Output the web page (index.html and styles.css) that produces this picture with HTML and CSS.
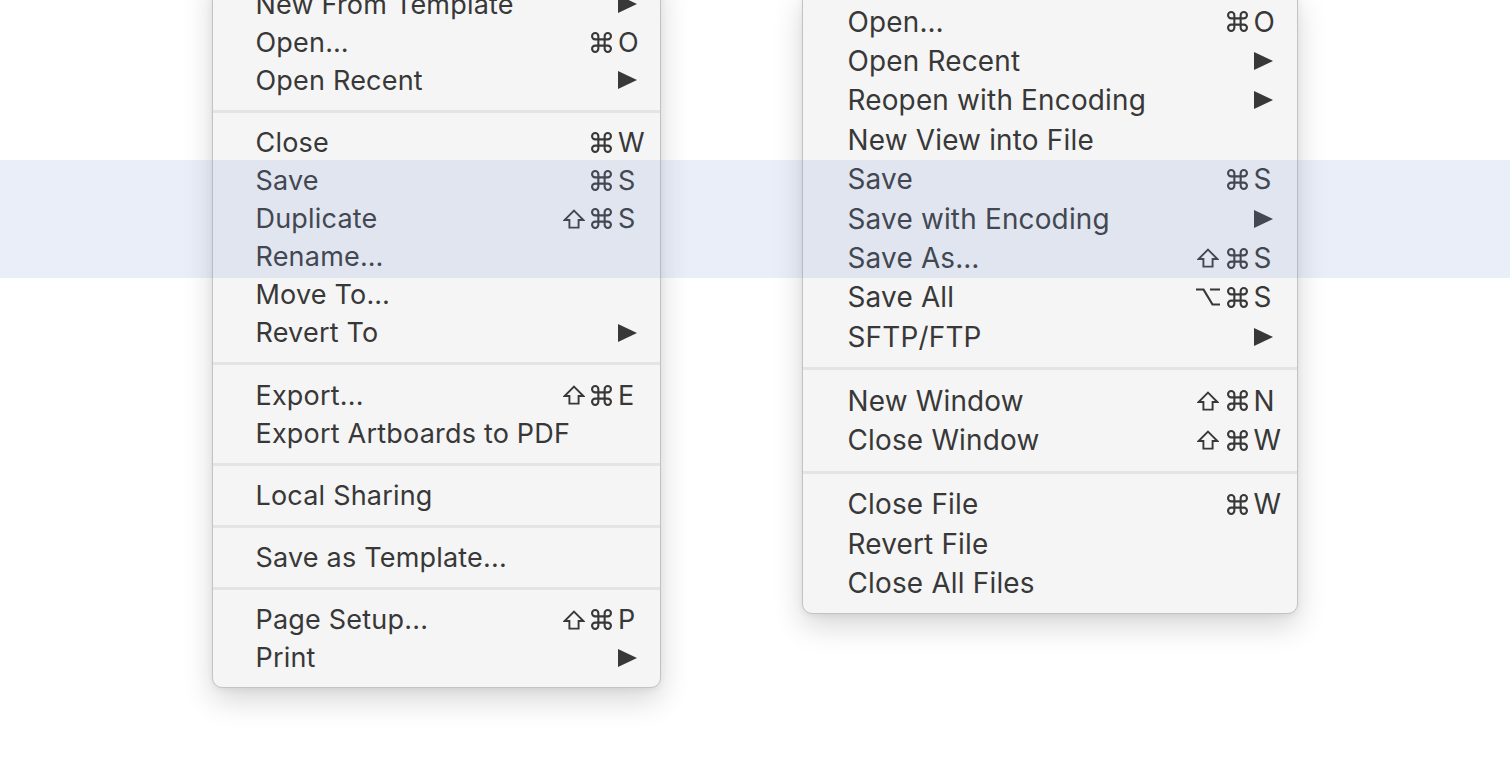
FILE: index.html
```html
<!DOCTYPE html>
<html lang="en">
<head>
<meta charset="utf-8">
<title>Menus</title>
<link rel="stylesheet" href="styles.css">
</head>
<body>
<svg class="defs" width="0" height="0" aria-hidden="true">
  <defs>
    <symbol id="cmd" viewBox="2 2 20 20"><path d="M9 9V6A3 3 0 1 0 6 9H18A3 3 0 1 0 15 6V18A3 3 0 1 0 18 15H6A3 3 0 1 0 9 18Z"/></symbol>
    <symbol id="shift" viewBox="0 0 22 20"><path d="M11 1.6L20.4 11H15.6V18.6H6.4V11H1.6Z"/></symbol>
    <symbol id="opt" viewBox="0 0 26 20"><path d="M1 2.5H8.5L17.5 17.5H25M15 2.5H25"/></symbol>
    <symbol id="sub" viewBox="0 0 19 18"><polygon points="0,0 19,9 0,18"/></symbol>
  </defs>
</svg>
<div class="stage">
  <div class="menu menu-left">
    <div class="row"><span class="label">New From Template</span><span class="keys"><span class="key"><svg class="arrow" width="19" height="18"><use href="#sub"/></svg></span></span></div>
    <div class="row"><span class="label">Open…</span><span class="keys"><span class="mod"><svg class="ic-cmd" width="21" height="21"><use href="#cmd"/></svg></span><span class="key">O</span></span></div>
    <div class="row"><span class="label">Open Recent</span><span class="keys"><span class="key"><svg class="arrow" width="19" height="18"><use href="#sub"/></svg></span></span></div>
    <div class="sep"></div>
    <div class="row"><span class="label">Close</span><span class="keys"><span class="mod"><svg class="ic-cmd" width="21" height="21"><use href="#cmd"/></svg></span><span class="key">W</span></span></div>
    <div class="row"><span class="label">Save</span><span class="keys"><span class="mod"><svg class="ic-cmd" width="21" height="21"><use href="#cmd"/></svg></span><span class="key">S</span></span></div>
    <div class="row"><span class="label">Duplicate</span><span class="keys"><span class="mod mod-shift"><svg class="ic-shift" width="22" height="20"><use href="#shift"/></svg></span><span class="mod"><svg class="ic-cmd" width="21" height="21"><use href="#cmd"/></svg></span><span class="key">S</span></span></div>
    <div class="row"><span class="label">Rename…</span></div>
    <div class="row"><span class="label">Move To…</span></div>
    <div class="row"><span class="label">Revert To</span><span class="keys"><span class="key"><svg class="arrow" width="19" height="18"><use href="#sub"/></svg></span></span></div>
    <div class="sep"></div>
    <div class="row"><span class="label">Export...</span><span class="keys"><span class="mod mod-shift"><svg class="ic-shift" width="22" height="20"><use href="#shift"/></svg></span><span class="mod"><svg class="ic-cmd" width="21" height="21"><use href="#cmd"/></svg></span><span class="key">E</span></span></div>
    <div class="row"><span class="label">Export Artboards to PDF</span></div>
    <div class="sep"></div>
    <div class="row"><span class="label">Local Sharing</span></div>
    <div class="sep"></div>
    <div class="row"><span class="label">Save as Template...</span></div>
    <div class="sep"></div>
    <div class="row"><span class="label">Page Setup...</span><span class="keys"><span class="mod mod-shift"><svg class="ic-shift" width="22" height="20"><use href="#shift"/></svg></span><span class="mod"><svg class="ic-cmd" width="21" height="21"><use href="#cmd"/></svg></span><span class="key">P</span></span></div>
    <div class="row"><span class="label">Print</span><span class="keys"><span class="key"><svg class="arrow" width="19" height="18"><use href="#sub"/></svg></span></span></div>
  </div>

  <div class="menu menu-right">
    <div class="row"><span class="label">Open…</span><span class="keys"><span class="mod"><svg class="ic-cmd" width="21" height="21"><use href="#cmd"/></svg></span><span class="key">O</span></span></div>
    <div class="row"><span class="label">Open Recent</span><span class="keys"><span class="key"><svg class="arrow" width="19" height="18"><use href="#sub"/></svg></span></span></div>
    <div class="row"><span class="label">Reopen with Encoding</span><span class="keys"><span class="key"><svg class="arrow" width="19" height="18"><use href="#sub"/></svg></span></span></div>
    <div class="row"><span class="label">New View into File</span></div>
    <div class="row"><span class="label">Save</span><span class="keys"><span class="mod"><svg class="ic-cmd" width="21" height="21"><use href="#cmd"/></svg></span><span class="key">S</span></span></div>
    <div class="row"><span class="label">Save with Encoding</span><span class="keys"><span class="key"><svg class="arrow" width="19" height="18"><use href="#sub"/></svg></span></span></div>
    <div class="row"><span class="label">Save As…</span><span class="keys"><span class="mod mod-shift"><svg class="ic-shift" width="22" height="20"><use href="#shift"/></svg></span><span class="mod"><svg class="ic-cmd" width="21" height="21"><use href="#cmd"/></svg></span><span class="key">S</span></span></div>
    <div class="row"><span class="label">Save All</span><span class="keys"><span class="mod mod-opt"><svg class="ic-opt" width="26" height="20"><use href="#opt"/></svg></span><span class="mod"><svg class="ic-cmd" width="21" height="21"><use href="#cmd"/></svg></span><span class="key">S</span></span></div>
    <div class="row"><span class="label">SFTP/FTP</span><span class="keys"><span class="key"><svg class="arrow" width="19" height="18"><use href="#sub"/></svg></span></span></div>
    <div class="sep"></div>
    <div class="row"><span class="label">New Window</span><span class="keys"><span class="mod mod-shift"><svg class="ic-shift" width="22" height="20"><use href="#shift"/></svg></span><span class="mod"><svg class="ic-cmd" width="21" height="21"><use href="#cmd"/></svg></span><span class="key">N</span></span></div>
    <div class="row"><span class="label">Close Window</span><span class="keys"><span class="mod mod-shift"><svg class="ic-shift" width="22" height="20"><use href="#shift"/></svg></span><span class="mod"><svg class="ic-cmd" width="21" height="21"><use href="#cmd"/></svg></span><span class="key">W</span></span></div>
    <div class="sep"></div>
    <div class="row"><span class="label">Close File</span><span class="keys"><span class="mod"><svg class="ic-cmd" width="21" height="21"><use href="#cmd"/></svg></span><span class="key">W</span></span></div>
    <div class="row"><span class="label">Revert File</span></div>
    <div class="row"><span class="label">Close All Files</span></div>
  </div>
</div>
<div class="highlight"></div>
</body>
</html>
```

FILE: styles.css
```css
* { box-sizing: border-box; }

html, body {
  margin: 0;
  height: 784px;
  overflow: hidden;
  background: #ffffff;
}

body {
  font-family: Inter, "Liberation Sans", Arial, sans-serif;
  color: #383838;
  position: relative;
}

.defs {
  position: absolute;
  width: 0;
  height: 0;
  overflow: hidden;
}

.stage {
  display: flex;
  align-items: flex-start;
  gap: 141px;
  padding-left: 212px;
}

.menu {
  background: #f5f5f5;
  border: 1px solid #c3c3c3;
  border-radius: 0 0 10px 10px;
  box-shadow: 0 12px 30px rgba(0, 0, 0, 0.16), 0 2px 6px rgba(0, 0, 0, 0.06);
  padding: 10px 0;
  letter-spacing: 0.2px;
}

.menu-left {
  width: 449px;
  margin-top: -26px;
  font-size: 27px;
}

.menu-right {
  width: 496px;
  margin-top: -9px;
  font-size: 27.9px;
}

.row {
  display: flex;
  align-items: center;
  white-space: nowrap;
}

.menu-left .row {
  height: 38.1px;
  padding: 0 17px 0 42.5px;
}

.menu-right .row {
  height: 39.4px;
  padding: 0 18.5px 0 44.5px;
}

.label {
  flex: 1;
}

.keys {
  display: flex;
  align-items: center;
}

.mod {
  width: 27px;
  display: flex;
  align-items: center;
}

.mod-shift {
  width: 28px;
}

.menu-right .mod-shift {
  width: 30px;
}

.mod-opt {
  width: 32px;
}

.mod svg {
  display: block;
  fill: none;
  stroke: #383838;
}

.ic-cmd {
  stroke-width: 2;
}

.ic-shift {
  stroke-width: 1.9;
  stroke-linejoin: miter;
}

.ic-opt {
  stroke-width: 2.2;
}

.key {
  width: 25px;
  display: flex;
  align-items: center;
}

.arrow {
  display: block;
  fill: #383838;
}

.sep {
  height: 24.1px;
  display: flex;
  align-items: center;
}

.menu-right .sep {
  height: 24.7px;
}

.sep::before {
  content: "";
  display: block;
  width: 100%;
  height: 3px;
  background: #e4e4e4;
}

.highlight {
  position: absolute;
  left: 0;
  right: 0;
  top: 160px;
  height: 118px;
  background: rgba(120, 150, 210, 0.16);
  pointer-events: none;
}
```
